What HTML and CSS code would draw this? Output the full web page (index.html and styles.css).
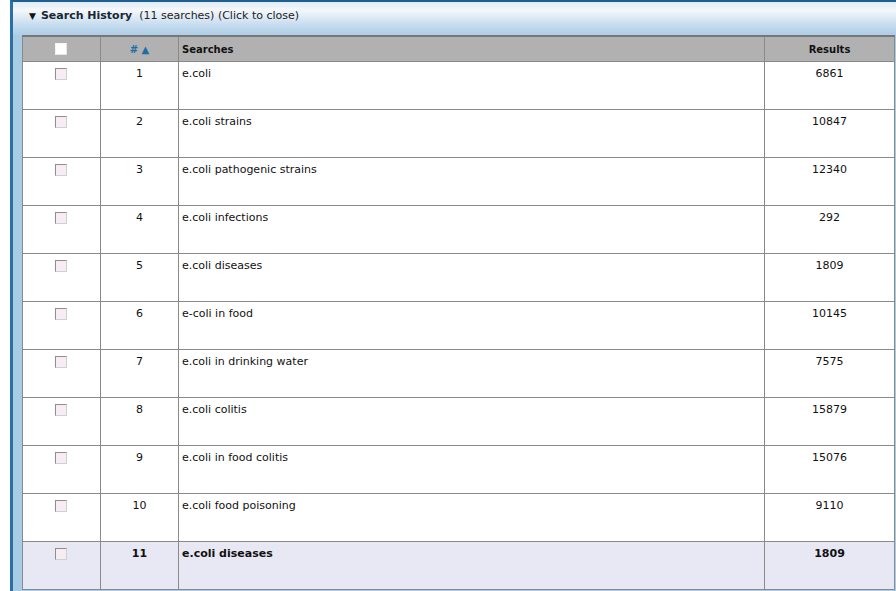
FILE: index.html
```html
<!DOCTYPE html>
<html lang="en">
<head>
  <meta charset="UTF-8" />
  <title>Search History</title>
  <link rel="stylesheet" href="styles.css">
</head>
<body>
  <div class="history-panel">
    <div class="history-header">
      <span class="toggle-arrow">&#9660;</span>
      <span class="history-title">Search History</span>
      <span class="history-info">(11 searches) (Click to close)</span>
    </div>
    <table class="history-table">
      <colgroup>
        <col class="col-check-w">
        <col class="col-num-w">
        <col>
        <col class="col-results-w">
      </colgroup>
      <thead>
        <tr>
          <th class="col-check"><span class="check check-head"></span></th>
          <th class="col-num"><span class="sort-link"># &#9650;</span></th>
          <th class="col-search">Searches</th>
          <th class="col-results">Results</th>
        </tr>
      </thead>
      <tbody>
        <tr><td class="col-check"><span class="check"></span></td><td class="col-num">1</td><td class="col-search">e.coli</td><td class="col-results">6861</td></tr>
        <tr><td class="col-check"><span class="check"></span></td><td class="col-num">2</td><td class="col-search">e.coli strains</td><td class="col-results">10847</td></tr>
        <tr><td class="col-check"><span class="check"></span></td><td class="col-num">3</td><td class="col-search">e.coli pathogenic strains</td><td class="col-results">12340</td></tr>
        <tr><td class="col-check"><span class="check"></span></td><td class="col-num">4</td><td class="col-search">e.coli infections</td><td class="col-results">292</td></tr>
        <tr><td class="col-check"><span class="check"></span></td><td class="col-num">5</td><td class="col-search">e.coli diseases</td><td class="col-results">1809</td></tr>
        <tr><td class="col-check"><span class="check"></span></td><td class="col-num">6</td><td class="col-search">e-coli in food</td><td class="col-results">10145</td></tr>
        <tr><td class="col-check"><span class="check"></span></td><td class="col-num">7</td><td class="col-search">e.coli in drinking water</td><td class="col-results">7575</td></tr>
        <tr><td class="col-check"><span class="check"></span></td><td class="col-num">8</td><td class="col-search">e.coli colitis</td><td class="col-results">15879</td></tr>
        <tr><td class="col-check"><span class="check"></span></td><td class="col-num">9</td><td class="col-search">e.coli in food colitis</td><td class="col-results">15076</td></tr>
        <tr><td class="col-check"><span class="check"></span></td><td class="col-num">10</td><td class="col-search">e.coli food poisoning</td><td class="col-results">9110</td></tr>
        <tr class="current-row"><td class="col-check"><span class="check"></span></td><td class="col-num">11</td><td class="col-search">e.coli diseases</td><td class="col-results">1809</td></tr>
      </tbody>
    </table>
  </div>
</body>
</html>
```

FILE: styles.css
```css
body {
  margin: 0;
  overflow: hidden;
  background-color: #ffffff;
  font-family: 'DejaVu Sans', Tahoma, sans-serif;
  font-size: 11px;
  color: #111;
}

.history-panel {
  margin-left: 10px;
  width: 900px;
  height: 600px;
  border-top: 2px solid #1f5f8f;
  border-left: 3px solid #2a6fa5;
  background: linear-gradient(to bottom, #dfecf5 0px, #f4f8fb 8px, #c9def0 22px, #a9cce5 34px, #a9cce5 100%);
  padding: 0 0 0 9px;
  box-sizing: border-box;
}

.history-header {
  height: 33px;
  display: flex;
  align-items: flex-start;
  padding-left: 7px;
  padding-top: 7px;
  box-sizing: border-box;
}

.toggle-arrow {
  font-size: 9px;
  color: #111;
  margin-right: 5px;
  margin-top: 2px;
}

.history-title {
  font-size: 11px;
  font-weight: bold;
  color: #1b2633;
  margin-right: 7px;
}

.history-info {
  font-size: 11px;
  color: #222;
}

.history-table {
  border-collapse: collapse;
  width: 873px;
  background-color: #ffffff;
  table-layout: fixed;
}

.col-check-w {
  width: 78px;
}

.col-num-w {
  width: 78px;
}

.col-results-w {
  width: 130px;
}

.history-table th {
  height: 24px;
  background-color: #b1b1b1;
  border-top: 2px solid #777;
  border-left: 1px solid #8a8a8a;
  border-right: 1px solid #8a8a8a;
  border-bottom: 1px solid #8a8a8a;
  font-weight: bold;
  font-size: 10px;
  color: #111;
  padding: 0 3px;
  vertical-align: middle;
}

.history-table td {
  height: 42px;
  border: 1px solid #8a8a8a;
  padding: 5px 3px 0 3px;
  vertical-align: top;
}

.col-check,
.col-num,
.col-results {
  text-align: center;
}

.history-table th.col-search,
.history-table td.col-search {
  text-align: left;
}

.check {
  display: inline-block;
  width: 10px;
  height: 10px;
  border: 1px solid #8e8e8e;
  border-right-color: #d0d0d0;
  border-bottom-color: #d0d0d0;
  background-color: #f7ecf3;
  margin-left: -2px;
  margin-top: 1px;
}

.check-head {
  background-color: #ffffff;
  border-color: #e6e6e6;
  border-left-color: #f4f4f4;
  border-top-color: #f4f4f4;
  margin-top: 2px;
}

.sort-link {
  color: #1c6ea4;
  font-size: 10px;
}

.current-row td {
  background-color: #e8e8f4;
  font-weight: bold;
}
```
